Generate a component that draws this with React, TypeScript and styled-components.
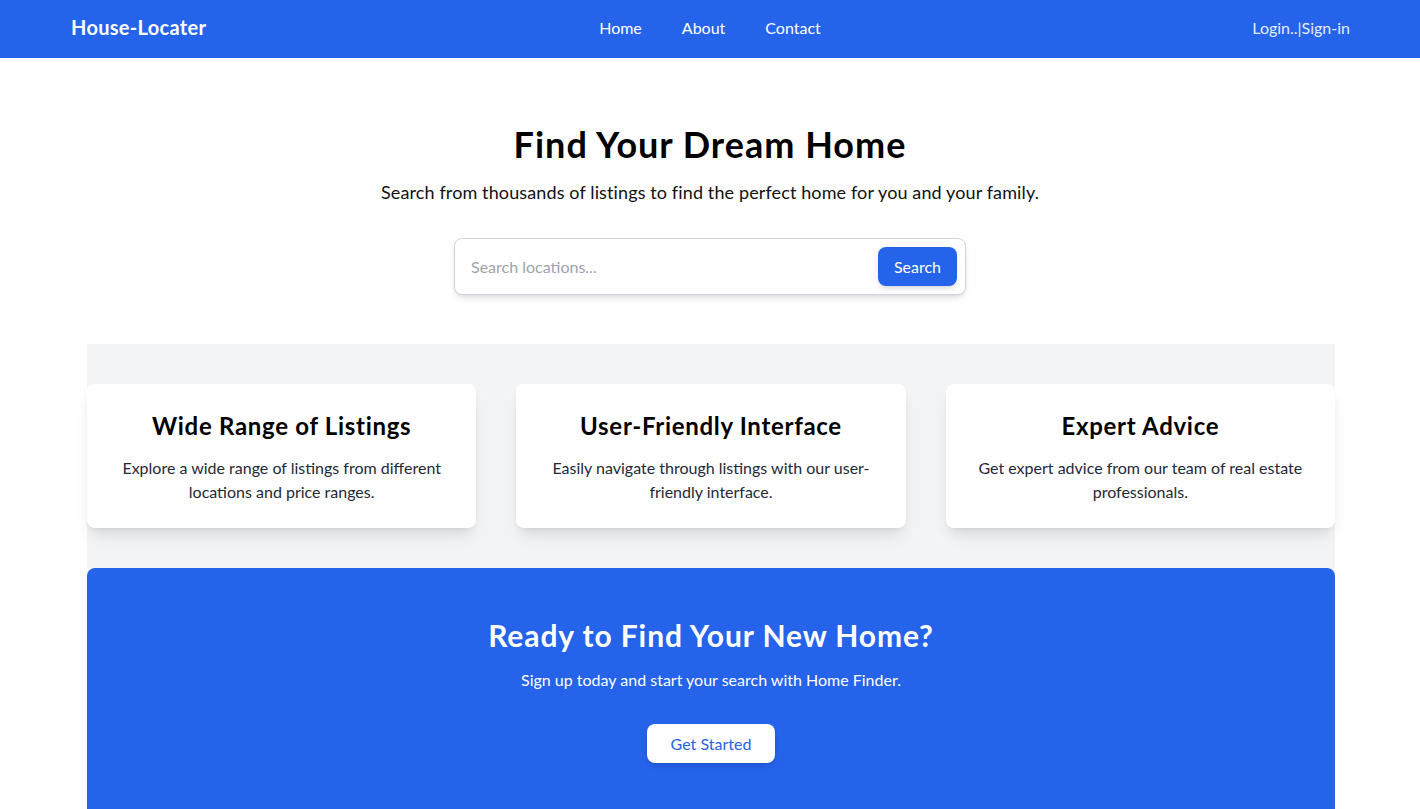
import { FC } from 'react';
import styled, { createGlobalStyle } from 'styled-components';

const BLUE = '#2563eb';
const FONT = '"Lato", "Noto Sans", "Liberation Sans", sans-serif';

const GlobalStyle = createGlobalStyle`
  html, body {
    margin: 0;
    padding: 0;
    background: #ffffff;
    font-family: ${FONT};
    color: #111111;
  }
  * {
    box-sizing: border-box;
  }
`;

const Page = styled.div`
  min-height: 809px;
`;

/* ---------- navbar ---------- */

const NavBar = styled.header`
  background-color: ${BLUE};
  height: 58px;
`;

const NavInner = styled.nav`
  max-width: 1280px;
  height: 100%;
  margin: 0 auto;
  padding-bottom: 4px;
  display: grid;
  grid-template-columns: 1fr auto 1fr;
  align-items: center;
`;

const Logo = styled.a`
  font-size: 20px;
  font-weight: 700;
  letter-spacing: 0.3px;
  color: #ffffff;
  padding-left: 1px;
`;

const NavLinks = styled.ul`
  display: flex;
  gap: 40px;
  list-style: none;
  margin: 0;
  padding: 0;
`;

const NavLink = styled.li`
  font-size: 16px;
  color: #ffffff;
`;

const AuthLink = styled.a`
  justify-self: end;
  font-size: 16px;
  color: #e5ecfb;
`;

/* ---------- hero ---------- */

const Hero = styled.section`
  padding: 66px 16px 49px;
  text-align: center;
`;

const HeroTitle = styled.h1`
  margin: 0 0 14px;
  font-size: 36px;
  line-height: 40px;
  font-weight: 700;
  letter-spacing: 1px;
  color: #000000;
`;

const HeroText = styled.p`
  margin: 0 0 32px;
  font-size: 18px;
  line-height: 28px;
  letter-spacing: 0.12px;
`;

const SearchBox = styled.form`
  width: 512px;
  margin: 0 auto;
  display: flex;
  align-items: center;
  padding: 8px;
  border: 1px solid #d1d5db;
  border-radius: 8px;
  background: #ffffff;
  box-shadow: 0 4px 6px -1px rgba(0, 0, 0, 0.1), 0 2px 4px -2px rgba(0, 0, 0, 0.1);
`;

const SearchInput = styled.input`
  flex: 1;
  border: none;
  outline: none;
  padding: 0 8px;
  font-family: ${FONT};
  font-size: 16px;
  color: #111111;
  &::placeholder {
    color: #9ca3af;
  }
`;

const Button = styled.button<{ $light?: boolean }>`
  font-family: ${FONT};
  font-size: 16px;
  line-height: 23px;
  padding: 8px ${(p) => (p.$light ? 24 : 16)}px;
  border: none;
  border-radius: 8px;
  cursor: pointer;
  background: ${(p) => (p.$light ? '#ffffff' : BLUE)};
  color: ${(p) => (p.$light ? BLUE : '#ffffff')};
  box-shadow: 0 4px 6px -1px rgba(0, 0, 0, 0.1), 0 2px 4px -2px rgba(0, 0, 0, 0.1);
`;

/* ---------- features ---------- */

const Container = styled.div`
  width: 1248px;
  margin: 0 auto;
  position: relative;
  left: 1px;
`;

const Features = styled.section`
  background-color: #f3f4f6;
  padding: 40px 0;
  display: grid;
  grid-template-columns: repeat(3, 1fr);
  gap: 40px;
`;

const Card = styled.div`
  background: #ffffff;
  border-radius: 8px;
  padding: 26px 32px 24px;
  text-align: center;
  box-shadow: 0 10px 15px -3px rgba(0, 0, 0, 0.1), 0 4px 6px -4px rgba(0, 0, 0, 0.1);
`;

const CardTitle = styled.h3`
  margin: 0 0 14px;
  font-size: 24px;
  line-height: 32px;
  font-weight: 700;
  letter-spacing: 0.7px;
  color: #000000;
`;

const CardText = styled.p`
  margin: 0;
  font-size: 16px;
  line-height: 24px;
  color: #1f2937;
`;

/* ---------- call to action ---------- */

const Cta = styled.section`
  background-color: ${BLUE};
  border-radius: 8px 8px 0 0;
  padding: 49px 16px 48px;
  text-align: center;
  color: #ffffff;
`;

const CtaTitle = styled.h2`
  margin: 0 0 15px;
  font-size: 30px;
  line-height: 36px;
  font-weight: 700;
  letter-spacing: 0.9px;
`;

const CtaText = styled.p`
  margin: 0 0 32px;
  font-size: 16px;
  line-height: 24px;
`;

const features = [
  {
    title: 'Wide Range of Listings',
    text: 'Explore a wide range of listings from different locations and price ranges.',
  },
  {
    title: 'User-Friendly Interface',
    text: 'Easily navigate through listings with our user-friendly interface.',
  },
  {
    title: 'Expert Advice',
    text: 'Get expert advice from our team of real estate professionals.',
  },
];

const App: FC = () => (
  <Page>
    <GlobalStyle />
    <NavBar>
      <NavInner>
        <Logo>House-Locater</Logo>
        <NavLinks>
          <NavLink>Home</NavLink>
          <NavLink>About</NavLink>
          <NavLink>Contact</NavLink>
        </NavLinks>
        <AuthLink>Login..|Sign-in</AuthLink>
      </NavInner>
    </NavBar>

    <Hero>
      <HeroTitle>Find Your Dream Home</HeroTitle>
      <HeroText>
        Search from thousands of listings to find the perfect home for you and your family.
      </HeroText>
      <SearchBox onSubmit={(e) => e.preventDefault()}>
        <SearchInput placeholder="Search locations..." />
        <Button type="submit">Search</Button>
      </SearchBox>
    </Hero>

    <Container>
      <Features>
        {features.map((f) => (
          <Card key={f.title}>
            <CardTitle>{f.title}</CardTitle>
            <CardText>{f.text}</CardText>
          </Card>
        ))}
      </Features>

      <Cta>
        <CtaTitle>Ready to Find Your New Home?</CtaTitle>
        <CtaText>Sign up today and start your search with Home Finder.</CtaText>
        <Button $light type="button">
          Get Started
        </Button>
      </Cta>
    </Container>
  </Page>
);

export default App;
